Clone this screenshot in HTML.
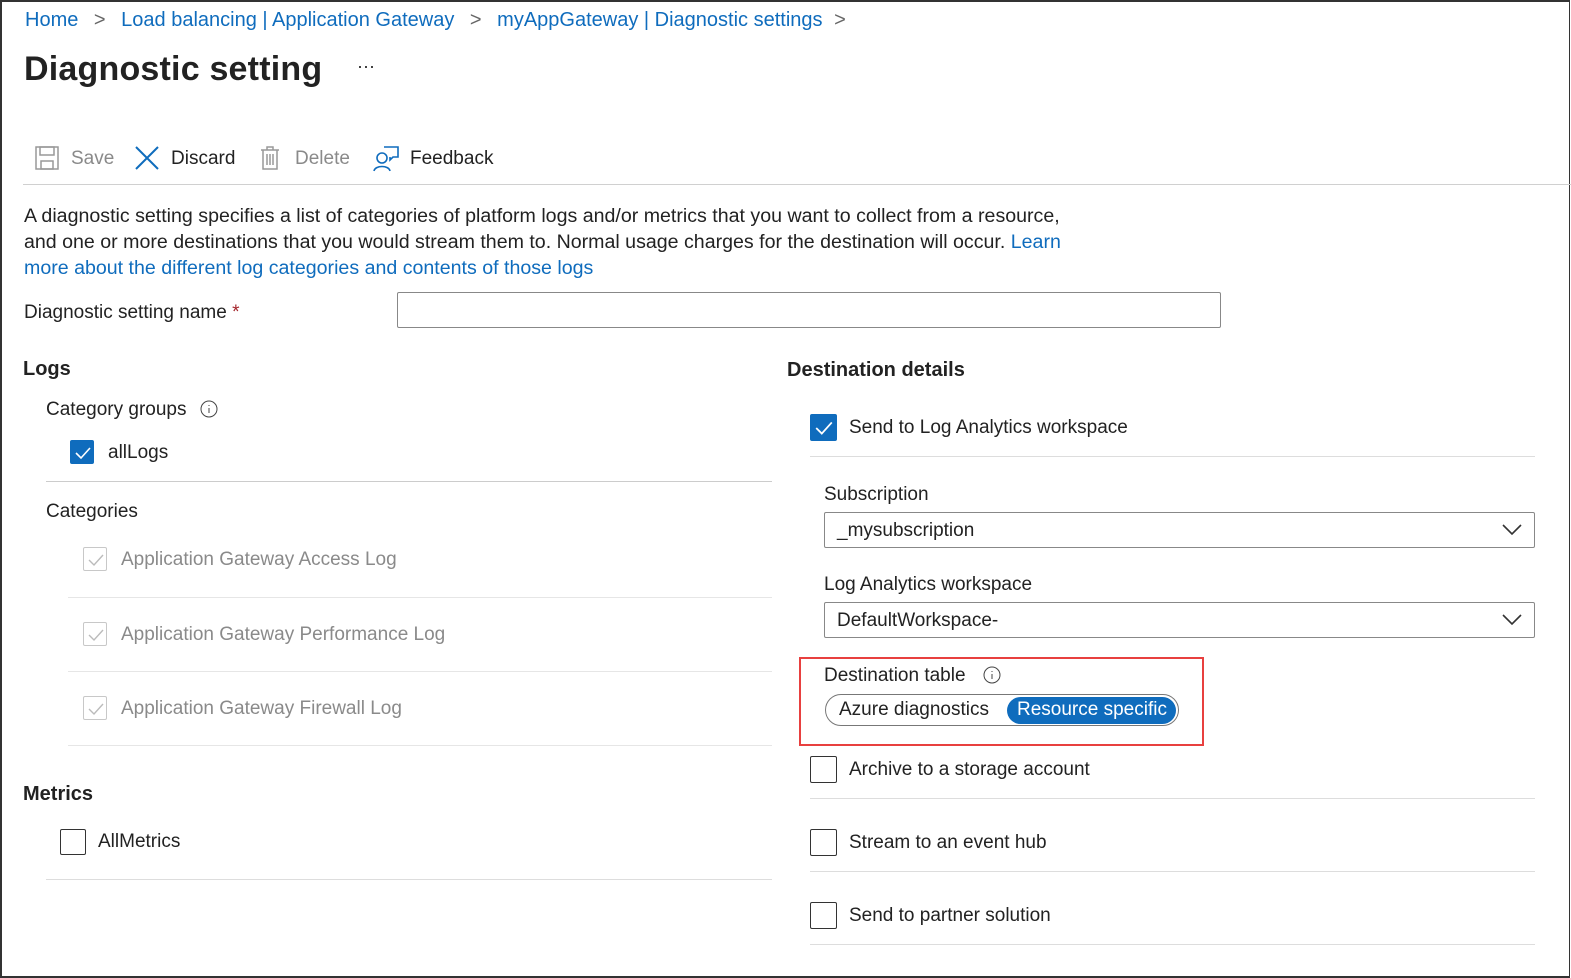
<!DOCTYPE html>
<html><head><meta charset="utf-8"><style>
body{margin:0;width:1571px;height:978px;overflow:hidden;background:#fff;font-family:"Liberation Sans",sans-serif;color:#222;}
.f{position:absolute;left:0;top:0;width:1567px;height:974px;border:2px solid #333;border-right:1px solid #333;border-bottom:2px solid #333;}
.a{position:absolute;white-space:nowrap;font-size:19px;}
.b{color:#0f6cbd;}
.g{color:#8a8a8a;}
.cb{position:absolute;width:24px;height:24px;border:1px solid #333;border-radius:2px;box-sizing:border-box;}
.cb.on{background:#0f6cbd;border-color:#0f6cbd;}
.cb.dis{border-color:#c8c8c8;}
.cb svg{position:absolute;left:3px;top:3px;}
.hr{position:absolute;height:1px;background:#ddd;}
.sel{position:absolute;height:34px;border:1px solid #888;border-radius:2px;box-sizing:border-box;}
</style></head><body>
<div class="f"></div>
<div class="a b" style="left:25px;top:9px;font-size:20px">Home <span style="color:#666;margin:0 10px">&gt;</span> Load balancing | Application Gateway <span style="color:#666;margin:0 10px">&gt;</span> myAppGateway | Diagnostic settings <span style="color:#666;margin:0 6px">&gt;</span></div>
<div class="a" style="left:24px;top:50px;font-size:34px;font-weight:bold;color:#222;letter-spacing:0.2px">Diagnostic setting</div>
<div class="a" style="left:357px;top:56px;font-size:18px">···</div>
<svg style="position:absolute;left:35px;top:146px" width="24" height="24" viewBox="0 0 24 24" fill="none" stroke="#999" stroke-width="1.5"><rect x="1" y="1" width="22" height="22"/><rect x="5" y="1" width="14" height="8"/><rect x="6" y="15" width="12" height="8"/></svg>
<div class="a g" style="left:71px;top:148px">Save</div>
<svg style="position:absolute;left:134px;top:145px" width="26" height="26" viewBox="0 0 26 26" stroke="#0f6cbd" stroke-width="2"><path d="M2 2L24 24M24 2L2 24"/></svg>
<div class="a" style="left:171px;top:148px">Discard</div>
<svg style="position:absolute;left:260px;top:146px" width="20" height="24" viewBox="0 0 20 24" fill="none" stroke="#999" stroke-width="1.5"><path d="M1 4H19M7 4V1H13V4M3 4V23H17V4M7 8V19M10 8V19M13 8V19"/></svg>
<div class="a g" style="left:295px;top:148px">Delete</div>
<svg style="position:absolute;left:373px;top:146px" width="26" height="26" viewBox="0 0 26 26" fill="none" stroke="#0f6cbd" stroke-width="1.6"><circle cx="9" cy="12" r="5"/><path d="M1 25C2 19 16 19 17 25M11 1H25V11H20L17 14V11"/></svg>
<div class="a" style="left:410px;top:148px">Feedback</div>
<div class="hr" style="left:23px;top:184px;width:1548px;background:#d0d0d0"></div>
<div class="a" style="left:24px;top:203px;line-height:26px;font-size:19.6px">A diagnostic setting specifies a list of categories of platform logs and/or metrics that you want to collect from a resource,<br>and one or more destinations that you would stream them to. Normal usage charges for the destination will occur. <span class="b">Learn</span><br><span class="b">more about the different log categories and contents of those logs</span></div>
<div class="a" style="left:24px;top:302px">Diagnostic setting name <span style="color:#a4262c">*</span></div>
<div class="sel" style="left:397px;top:292px;width:824px;height:36px"></div>
<div class="a" style="left:23px;top:358px;font-weight:bold;font-size:20px">Logs</div>
<div class="a" style="left:46px;top:399px">Category groups</div>
<svg style="position:absolute;left:200px;top:400px" width="18" height="18" viewBox="0 0 18 18" fill="none" stroke="#444"><circle cx="9" cy="9" r="8"/><path d="M9 8V13M9 5V6"/></svg>
<div class="cb on" style="left:70px;top:440px"><svg width="18" height="18" viewBox="0 0 18 18" fill="none" stroke="#fff" stroke-width="1.6"><path d="M2 9L7 14L16 4"/></svg></div>
<div class="a" style="left:108px;top:442px">allLogs</div>
<div class="hr" style="left:46px;top:481px;width:726px;background:#ccc"></div>
<div class="a" style="left:46px;top:501px">Categories</div>
<div class="cb dis" style="left:83px;top:547px"><svg width="18" height="18" viewBox="0 0 18 18" fill="none" stroke="#bbb" stroke-width="1.4"><path d="M2 9L7 14L16 4"/></svg></div>
<div class="a g" style="left:121px;top:549px">Application Gateway Access Log</div>
<div class="hr" style="left:68px;top:597px;width:704px;background:#e6e6e6"></div>
<div class="cb dis" style="left:83px;top:622px"><svg width="18" height="18" viewBox="0 0 18 18" fill="none" stroke="#bbb" stroke-width="1.4"><path d="M2 9L7 14L16 4"/></svg></div>
<div class="a g" style="left:121px;top:624px">Application Gateway Performance Log</div>
<div class="hr" style="left:68px;top:671px;width:704px;background:#e6e6e6"></div>
<div class="cb dis" style="left:83px;top:696px"><svg width="18" height="18" viewBox="0 0 18 18" fill="none" stroke="#bbb" stroke-width="1.4"><path d="M2 9L7 14L16 4"/></svg></div>
<div class="a g" style="left:121px;top:698px">Application Gateway Firewall Log</div>
<div class="hr" style="left:68px;top:745px;width:704px;background:#e6e6e6"></div>
<div class="a" style="left:23px;top:783px;font-weight:bold;font-size:20px">Metrics</div>
<div class="cb" style="left:60px;top:829px;width:26px;height:26px"></div>
<div class="a" style="left:98px;top:831px">AllMetrics</div>
<div class="hr" style="left:46px;top:879px;width:726px"></div>

<div class="a" style="left:787px;top:359px;font-weight:bold;font-size:20px">Destination details</div>
<div class="cb on" style="left:810px;top:414px;width:27px;height:27px"><svg width="20" height="20" viewBox="0 0 18 18" fill="none" stroke="#fff" stroke-width="1.6"><path d="M2 9L7 14L16 4"/></svg></div>
<div class="a" style="left:849px;top:417px">Send to Log Analytics workspace</div>
<div class="hr" style="left:810px;top:456px;width:725px"></div>
<div class="a" style="left:824px;top:484px">Subscription</div>
<div class="sel" style="left:824px;top:512px;width:711px;height:36px"></div>
<div class="a" style="left:837px;top:520px">_mysubscription</div>
<svg style="position:absolute;left:1502px;top:524px" width="20" height="12" viewBox="0 0 20 12" fill="none" stroke="#333" stroke-width="1.6"><path d="M1 1L10 10L19 1"/></svg>
<div class="a" style="left:824px;top:574px">Log Analytics workspace</div>
<div class="sel" style="left:824px;top:602px;width:711px;height:36px"></div>
<div class="a" style="left:837px;top:610px">DefaultWorkspace-</div>
<svg style="position:absolute;left:1502px;top:614px" width="20" height="12" viewBox="0 0 20 12" fill="none" stroke="#333" stroke-width="1.6"><path d="M1 1L10 10L19 1"/></svg>
<div style="position:absolute;left:799px;top:657px;width:405px;height:89px;border:2px solid #e8403f;box-sizing:border-box"></div>
<div class="a" style="left:824px;top:665px">Destination table</div>
<svg style="position:absolute;left:983px;top:666px" width="18" height="18" viewBox="0 0 18 18" fill="none" stroke="#444"><circle cx="9" cy="9" r="8"/><path d="M9 8V13M9 5V6"/></svg>
<div style="position:absolute;left:825px;top:694px;width:354px;height:32px;border:1px solid #777;border-radius:16px;box-sizing:border-box"></div>
<div class="a" style="left:839px;top:699px">Azure diagnostics</div>
<div style="position:absolute;left:1007px;top:697px;width:169px;height:27px;background:#0f6cbd;border-radius:14px"></div>
<div class="a" style="left:1017px;top:699px;color:#fff">Resource specific</div>
<div class="cb" style="left:810px;top:756px;width:27px;height:27px"></div>
<div class="a" style="left:849px;top:759px">Archive to a storage account</div>
<div class="hr" style="left:810px;top:798px;width:725px"></div>
<div class="cb" style="left:810px;top:829px;width:27px;height:27px"></div>
<div class="a" style="left:849px;top:832px">Stream to an event hub</div>
<div class="hr" style="left:810px;top:871px;width:725px"></div>
<div class="cb" style="left:810px;top:902px;width:27px;height:27px"></div>
<div class="a" style="left:849px;top:905px">Send to partner solution</div>
<div class="hr" style="left:810px;top:944px;width:725px"></div>
</body></html>
